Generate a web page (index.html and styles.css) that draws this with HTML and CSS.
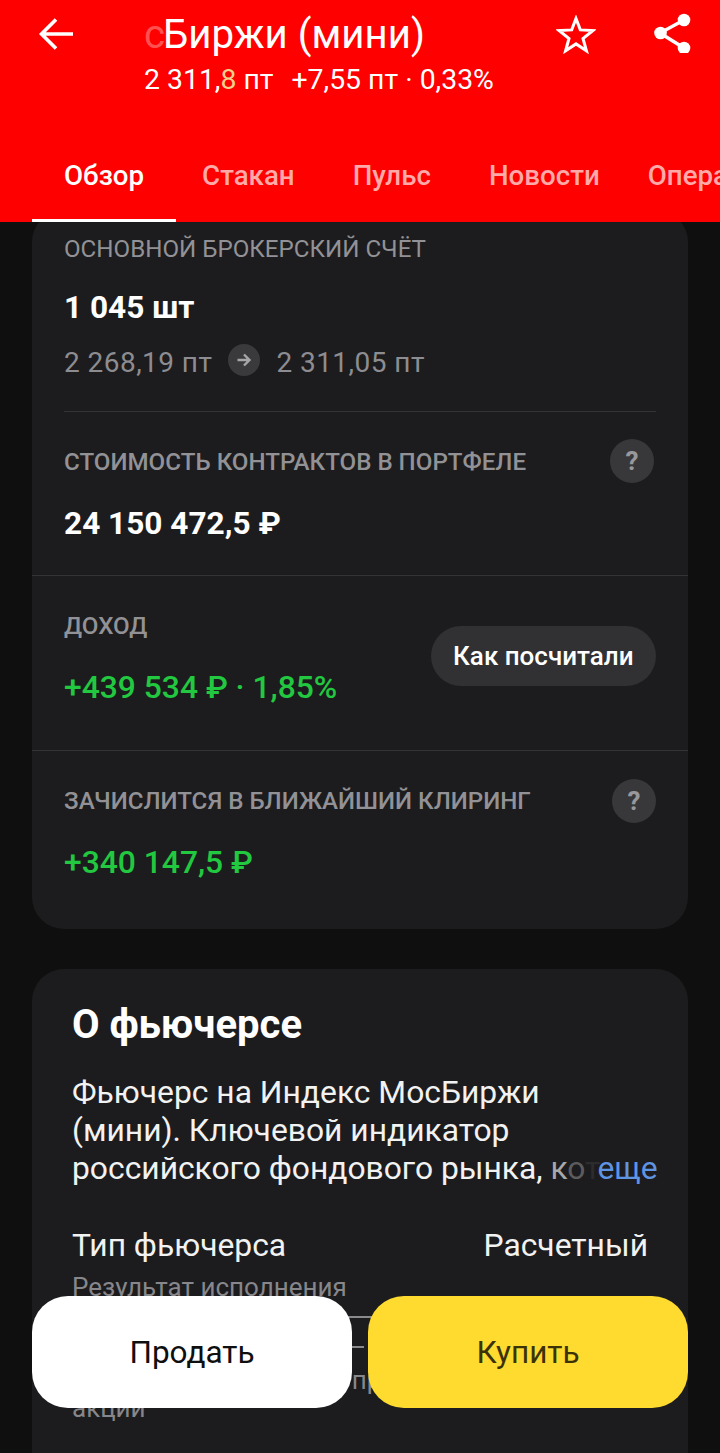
FILE: index.html
```html
<!DOCTYPE html>
<html lang="ru">
<head>
<meta charset="utf-8">
<title>Биржи (мини)</title>
<link rel="stylesheet" href="styles.css">
</head>
<body>
<div class="app">
  <header class="top">
    <div class="bar">
      <svg class="back" width="36" height="36" viewBox="0 0 36 36"><path d="M35 17H6M18 2.500 3.500 17 18 31.500" transform="translate(0 1)" fill="none" stroke="#fff" stroke-width="3.600"/></svg>
      <div class="heading">
        <div class="title"><span class="fade">с</span>Биржи (мини)</div>
        <div class="quote"><span>2 311,<span class="tick">8</span> пт</span><span>+7,55 пт · 0,33%</span></div>
      </div>
      <svg class="star" width="40" height="40" viewBox="0 0 40 40"><path d="M20 3.500 24.300 14.900 37 15.500 27 23.500 30.400 35.800 20 28.900 9.600 35.800 13 23.500 3 15.500 15.700 14.900Z" fill="none" stroke="#fff" stroke-width="3"/></svg>
      <svg class="share" width="40" height="40" viewBox="0 0 40 40"><path d="M30 7 6 20 30 35" fill="none" stroke="#fff" stroke-width="3.400"/><circle cx="30" cy="7" r="6.300" fill="#fff"/><circle cx="6.500" cy="20" r="6.300" fill="#fff"/><circle cx="30" cy="35" r="6.300" fill="#fff"/></svg>
    </div>
    <nav class="tabs">
      <span class="tab active">Обзор</span>
      <span class="tab">Стакан</span>
      <span class="tab">Пульс</span>
      <span class="tab news">Новости</span>
      <span class="tab">Операции</span>
    </nav>
  </header>
  <main class="content">
    <section class="card position">
      <div class="block first">
        <div class="label">ОСНОВНОЙ БРОКЕРСКИЙ СЧЁТ</div>
        <div class="value qty">1 045 шт</div>
        <div class="prices">
          <span>2 268,19 пт</span>
          <span class="arrow"><svg width="18" height="18" viewBox="0 0 18 18"><path d="M2.500 9H14M9 3.500 14.500 9 9 14.500" fill="none" stroke="#a6a6a8" stroke-width="2.400"/></svg></span>
          <span>2 311,05 пт</span>
        </div>
      </div>
      <div class="inset-line"></div>
      <div class="block row cost">
        <div>
          <div class="label">СТОИМОСТЬ КОНТРАКТОВ В ПОРТФЕЛЕ</div>
          <div class="value">24 150 472,5 ₽</div>
        </div>
        <span class="help">?</span>
      </div>
      <div class="line"></div>
      <div class="block row income">
        <div>
          <div class="label">ДОХОД</div>
          <div class="value green">+439 534 ₽ · 1,85%</div>
        </div>
        <span class="pill">Как посчитали</span>
      </div>
      <div class="line"></div>
      <div class="block row clearing">
        <div>
          <div class="label">ЗАЧИСЛИТСЯ В БЛИЖАЙШИЙ КЛИРИНГ</div>
          <div class="value green">+340 147,5 ₽</div>
        </div>
        <span class="help">?</span>
      </div>
    </section>
    <section class="card about">
      <h2>О фьючерсе</h2>
      <p class="desc">Фьючерс на Индекс МосБиржи<br>(мини). Ключевой индикатор<br>российского фондового рынка, <span class="k1">к</span><span class="k2">о</span><span class="k3">т</span><span class="more">еще</span></p>
      <div class="spec">
        <div class="spec-main"><span>Тип фьючерса</span><span>Расчетный</span></div>
        <div class="spec-note">Результат исполнения</div>
      </div>
      <div class="rule r1"></div>
      <div class="rule r2"></div>
      <div class="spec-tail">контракт — получение прибыли за<br>акции</div>
    </section>
  </main>
  <div class="actions">
    <button class="btn sell">Продать</button>
    <button class="btn buy">Купить</button>
  </div>
</div>
</body>
</html>
```
FILE: styles.css
```css
* { box-sizing: border-box; }
html, body { margin: 0; padding: 0; }
body { background: #0f0f0f; font-family: Roboto, "Liberation Sans", sans-serif; color: #fff; }
.app { position: relative; width: 720px; height: 1453px; overflow: hidden; display: flex; flex-direction: column; }

.top { position: relative; z-index: 2; flex: none; height: 222px; background: #fe0000; }
.bar { position: relative; height: 126px; }
.back { position: absolute; left: 38px; top: 16px; }
.heading { position: absolute; left: 144px; top: 11px; }
.title { font-size: 40.2px; line-height: 47px; font-weight: 400; white-space: nowrap; }
.fade { display: inline-block; width: 19px; color: #ff5050; }
.quote { display: flex; gap: 18px; margin-top: 4px; font-size: 28.4px; line-height: 36px; white-space: nowrap; }
.tick { color: #f4d08c; }
.star { position: absolute; left: 556px; top: 15px; }
.share { position: absolute; left: 654px; top: 13px; }

.tabs { display: flex; height: 96px; padding-left: 32px; white-space: nowrap; }
.tab { flex: none; height: 96px; padding: 32px 32px 0; margin-right: -6px; font-size: 27.7px; line-height: 36px; font-weight: 500; color: #ffa9a9; }
.tab.active { color: #fff; border-bottom: 3px solid #fff; }
.tab.news { margin-right: -16px; }

.content { flex: 1; min-height: 0; padding: 0 32px; }
.card { background: #1c1c1e; border-radius: 32px; }
.position { height: 719px; margin-top: -12px; padding-top: 12px; }

.block { padding: 0 32px; }
.first { height: 189px; }
.row { display: flex; justify-content: space-between; align-items: flex-start; }
.label { font-size: 24.15px; line-height: 32px; font-weight: 500; color: #929296; white-space: nowrap; }
.first .label { font-weight: 400; padding-top: 11px; }
.value { margin-top: 26px; font-size: 31.6px; line-height: 40px; font-weight: 700; white-space: nowrap; }
.qty { margin-top: 23px; }
.green { margin-top: 25px; color: #22c840; font-weight: 500; font-size: 31.8px; }
.prices { display: flex; align-items: center; gap: 16px; height: 40px; margin-top: 14px; font-size: 28px; color: #8d8d91; letter-spacing: .45px; white-space: nowrap; }
.arrow { display: flex; align-items: center; justify-content: center; width: 32px; height: 32px; border-radius: 50%; background: #3a3a3c; margin-top: -5px; }
.inset-line { height: 1px; margin: 0 32px; background: #333335; }
.line { height: 1px; background: #333335; }
.cost { height: 163px; padding-top: 34px; padding-right: 34px; }
.income { height: 174px; padding-top: 34px; padding-right: 32px; }
.clearing { padding-top: 34px; padding-right: 32px; }
.help { display: flex; align-items: center; justify-content: center; width: 44px; height: 44px; margin-top: -7px; border-radius: 50%; background: #38383a; color: #98989c; font-size: 26px; font-weight: 700; }
.clearing .help { margin-top: -6px; }
.pill { display: flex; align-items: center; height: 60px; padding: 0 22.500px; margin-top: 16px; border-radius: 30px; background: #313133; font-size: 26px; font-weight: 500; white-space: nowrap; }

.about { position: relative; height: 600px; margin-top: 40px; padding: 32px 40px 0; }
h2 { margin: 0; font-size: 40px; line-height: 47px; font-weight: 700; }
.desc { margin: 25px 0 0; font-size: 31.8px; line-height: 38px; color: #f2f2f2; white-space: nowrap; }
.k1 { color: #a8a8aa; }
.k2 { color: #5c5c5e; }
.k3 { color: #2c2c2e; }
.more { margin-left: -3px; color: #5f94e2; }
.spec { margin-top: 39px; }
.spec-main { display: flex; justify-content: space-between; width: 576px; font-size: 31.8px; line-height: 39px; color: #f2f2f2; }
.spec-note { margin-top: 6px; font-size: 26px; line-height: 32px; color: #87878b; white-space: nowrap; }
.rule { position: absolute; left: 300px; height: 2px; background: #8a8a8c; }
.r1 { top: 347px; width: 60px; }
.r2 { top: 377px; width: 32px; }
.spec-tail { position: absolute; left: 40px; top: 397px; font-size: 26px; line-height: 28px; color: #87878b; white-space: nowrap; }

.actions { position: absolute; z-index: 3; left: 32px; right: 32px; bottom: 45px; display: flex; gap: 16px; }
.btn { flex: 1; height: 112px; border: 0; border-radius: 36px; font-family: inherit; font-size: 31.5px; font-weight: 400; }
.sell { background: #fff; color: #0f0f0f; }
.buy { background: #fedb2e; color: #3c3208; }
```
